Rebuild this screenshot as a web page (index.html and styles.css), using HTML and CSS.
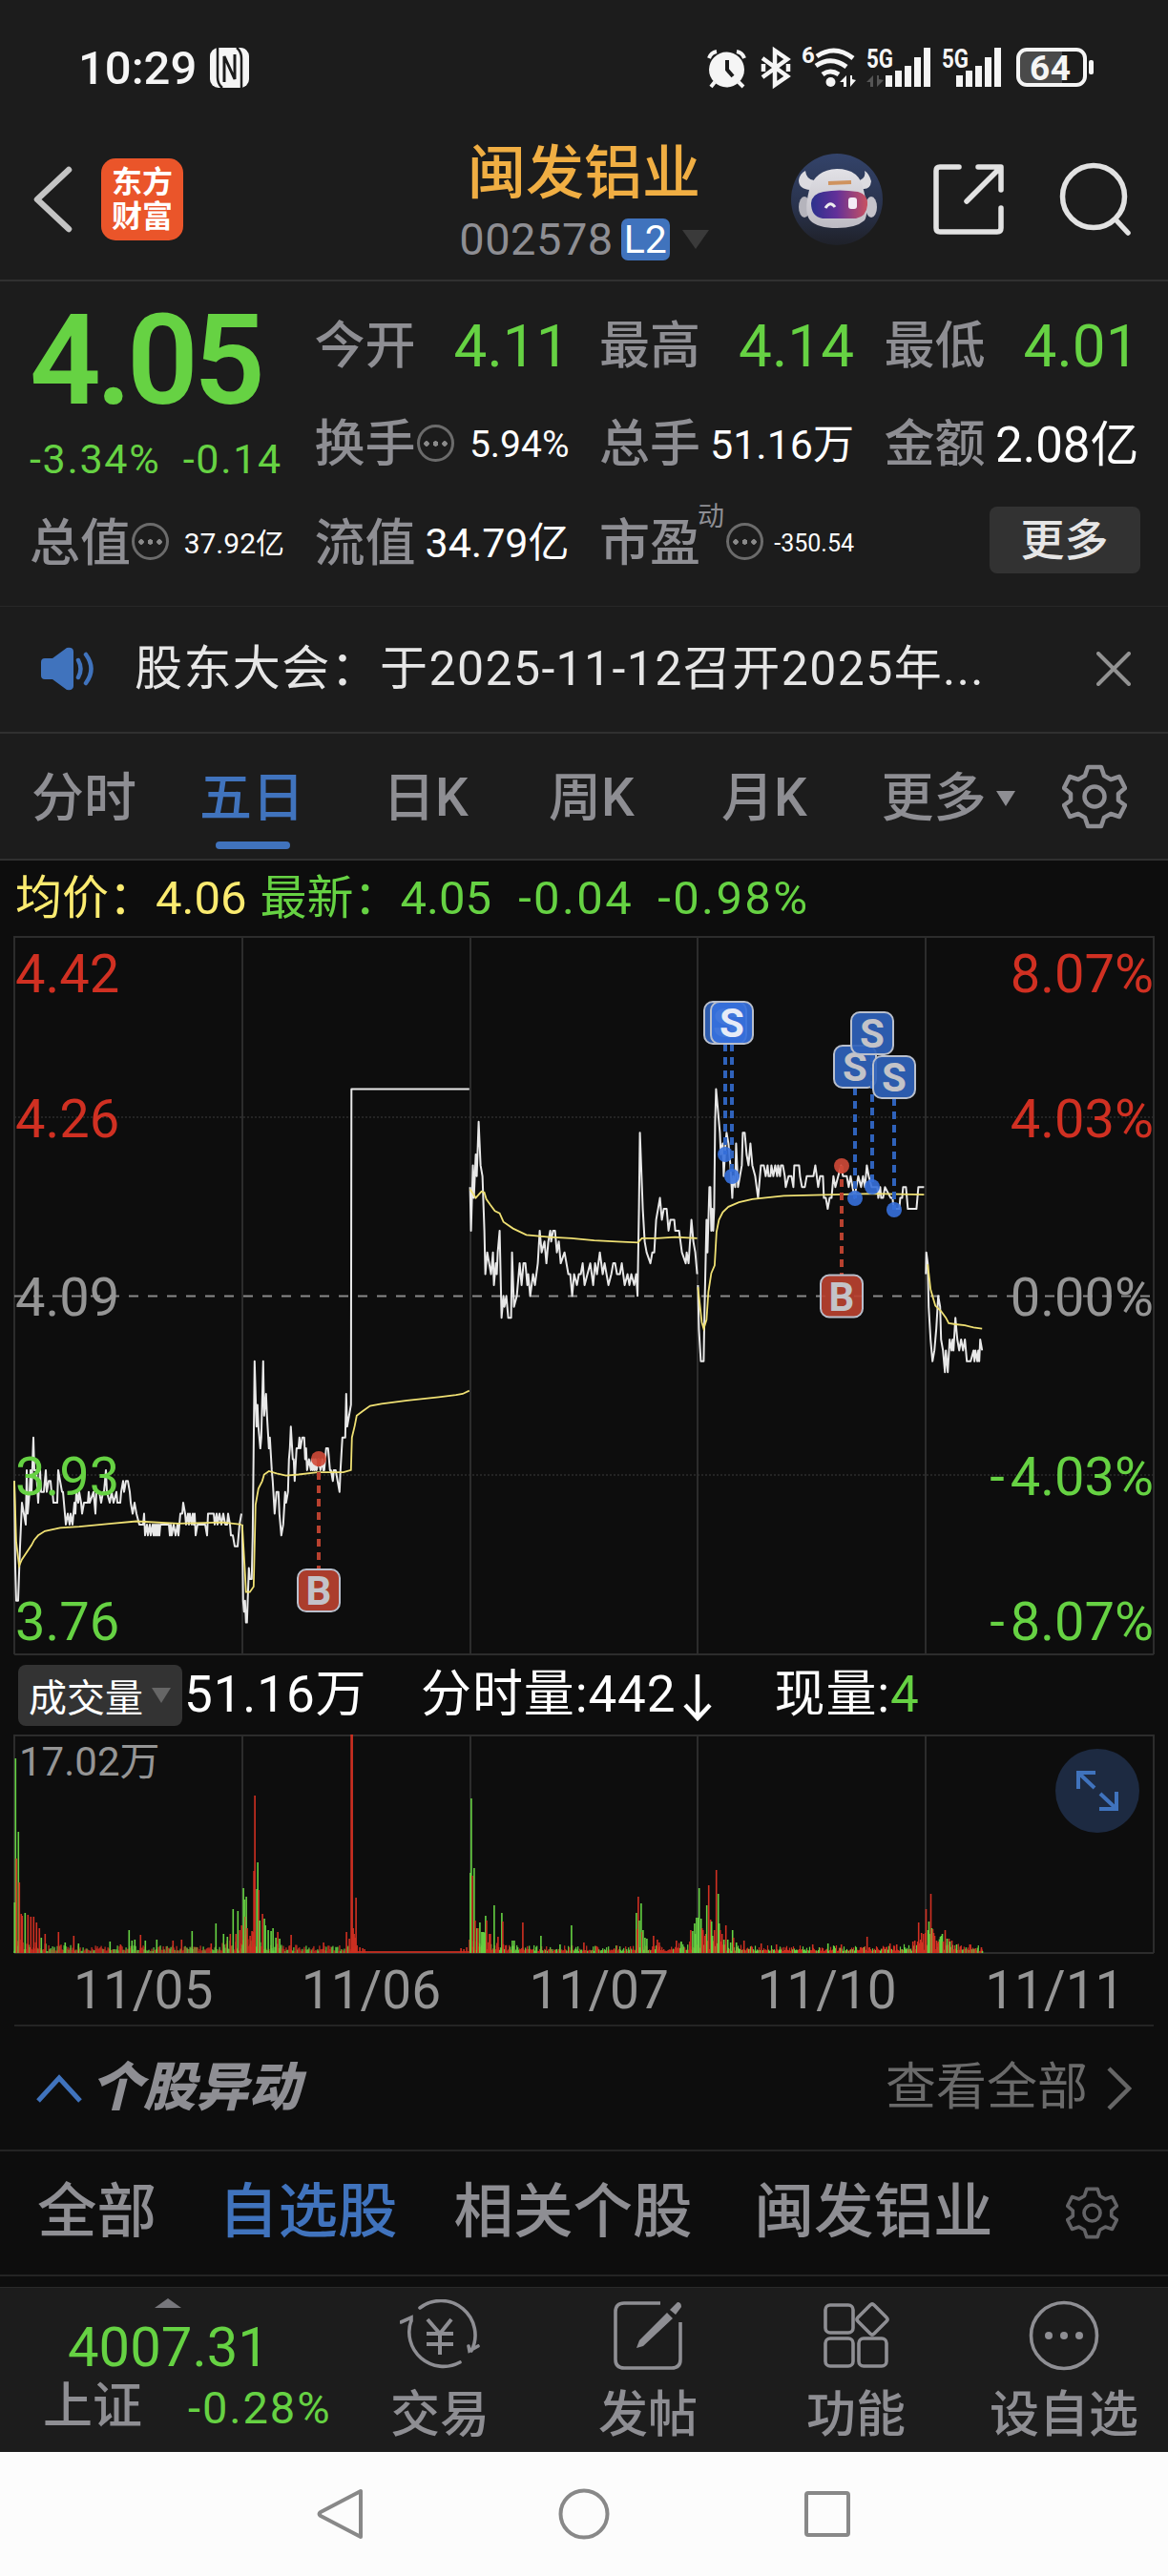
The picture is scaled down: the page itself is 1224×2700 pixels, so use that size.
FILE: index.html
```html
<!DOCTYPE html>
<html lang="zh-CN">
<head>
    <meta charset="UTF-8">
    <meta name="viewport" content="width=device-width, initial-scale=1.0">
    <title>闽发铝业 002578</title>
    <link rel="stylesheet" href="styles.css">
</head>
<body>
    <div class="status-bar">
        <div class="clock">
            <span>10:29</span>
            <svg width="41" height="42" viewBox="0 0 41 42">
                <rect width="41" height="42" rx="9" fill="#f5f5f5"/>
                <path d="M8 0V31Q8 38 13 42M33 42V11Q33 4 28 0" fill="none" stroke="#1c1c1c" stroke-width="2.5"/>
                <path d="M15 36V9L26 33V7" fill="none" stroke="#1c1c1c" stroke-width="3"/>
            </svg>
        </div>
        <svg class="status-icons" width="410" height="60" viewBox="738 41 410 60">
            <!-- alarm -->
            <circle cx="761.5" cy="73" r="18.5"/>
            <path d="M743 61Q745 55 751 54M780 61Q778 55 772 54M749 86L745 91M774 86L779 91" fill="none" stroke="#f5f5f5" stroke-width="4"/>
            <path d="M762 63V73L768 80" fill="none" stroke="#1c1c1c" stroke-width="4"/>
            <!-- bluetooth -->
            <path d="M799 61L825 80L812 89V53L825 62L799 81M800 67V75M826 67V75" fill="none" stroke="#f5f5f5" stroke-width="4.5"/>
            <!-- wifi -->
            <text x="840" y="66" font-size="24">6</text>
            <path d="M856 59Q875 46 894 61M855 69Q871 58 887 70M862 78Q870 72 879 78" fill="none" stroke="#f5f5f5" stroke-width="5"/>
            <circle cx="870.5" cy="86" r="5"/>
            <path d="M887 79V91H884V86H880ZM891 91V79H893V83L897 84Z"/>
            <!-- sim 1 -->
            <text x="908" y="71" font-size="27" textLength="28" lengthAdjust="spacingAndGlyphs">5G</text>
            <path d="M915 79V91H912V86H908ZM919 91V79H921V83L926 84Z" fill="#555"/>
            <path d="M928 79h7v12h-7zM938 74h7v17h-7zM948 69h7v22h-7zM958 60h7v31h-7zM968 50h7v41h-7z"/>
            <!-- sim 2 -->
            <text x="987" y="71" font-size="27" textLength="28" lengthAdjust="spacingAndGlyphs">5G</text>
            <path d="M1002 79h7v12h-7zM1012 74h7v17h-7zM1022 69h7v22h-7zM1032 60h7v31h-7zM1042 50h7v41h-7z"/>
            <!-- battery -->
            <path d="M1069 54h44v33h-44z" fill="#4a4a4a"/>
            <rect x="1067" y="52" width="70" height="37" rx="9" fill="none" stroke="#f5f5f5" stroke-width="4"/>
            <rect x="1141" y="63" width="5" height="15" rx="2"/>
            <text x="1079" y="84" font-size="37" textLength="43">64</text>
        </svg>
    </div>

    <header class="header">
        <div class="header-left">
            <svg width="42" height="70" viewBox="0 0 42 70"><path d="M38 4L5 35L38 66" fill="none" stroke="#c4c4c4" stroke-width="6.5" stroke-linecap="round" stroke-linejoin="round"/></svg>
            <div class="logo">东方<br>财富</div>
        </div>
        <div class="header-title">
            <h1>闽发铝业</h1>
            <div class="code"><span>002578</span><b class="level">L2</b><i class="caret"></i></div>
        </div>
        <div class="header-right">
            <svg width="96" height="96" viewBox="0 0 96 96">
                <defs>
                    <linearGradient id="sky" x1="0" y1="0" x2="0" y2="1"><stop offset="0" stop-color="#33436a"/><stop offset=".6" stop-color="#29324b"/><stop offset="1" stop-color="#1f2129"/></linearGradient>
                    <linearGradient id="visor"><stop offset="0" stop-color="#2b318d"/><stop offset=".45" stop-color="#623099"/><stop offset="1" stop-color="#c95260"/></linearGradient>
                    <linearGradient id="shell" x1="0" y1="0" x2="0" y2="1"><stop offset="0" stop-color="#e2e1e6"/><stop offset="1" stop-color="#bdbbc3"/></linearGradient>
                </defs>
                <circle cx="48" cy="48" r="48" fill="url(#sky)"/>
                <path d="M15 18Q16 27 24 28L20 38Q8 37 8 28Q9 21 15 18ZM77 18Q82 21 84 29Q83 38 75 37L72 28Q79 25 77 18Z" fill="#dcdbe0"/>
                <ellipse cx="14" cy="56" rx="6" ry="11" fill="#b5b4bc"/>
                <ellipse cx="84" cy="56" rx="6" ry="11" fill="#c5c3cb"/>
                <path d="M48 16Q72 16 76 38Q82 62 77 70Q68 78 48 78Q28 78 20 70Q13 62 19 38Q25 17 48 16Z" fill="url(#shell)"/>
                <path d="M39 31L63 30" stroke="#cf935f" stroke-width="4"/>
                <path d="M34 40Q50 37 70 40Q81 43 80 54Q79 66 68 68H33Q21 66 21 52Q22 42 34 40Z" fill="url(#visor)"/>
                <path d="M36 57Q41 49 46 56" fill="none" stroke="#eee" stroke-width="3"/>
                <rect x="60" y="46" width="9" height="12" rx="3" fill="#f3ecf5"/>
            </svg>
            <svg width="74" height="74" viewBox="0 0 74 74"><path d="M27 3H7Q3 3 3 7V67Q3 71 7 71H67Q71 71 71 67V46M47 3H71V27M70 4L35 39" fill="none" stroke="#e2e2e2" stroke-width="5.5" stroke-linecap="round" stroke-linejoin="round"/></svg>
            <svg width="76" height="78" viewBox="0 0 76 78"><circle cx="36" cy="36" r="32.5" fill="none" stroke="#e2e2e2" stroke-width="5.5"/><path d="M59 60L72 74" stroke="#e2e2e2" stroke-width="5.5" stroke-linecap="round"/></svg>
        </div>
    </header>

    <section class="quote">
        <div class="quote-main">
            <div class="price">4.05</div>
            <div class="change"><span>-3.34%</span><span>-0.14</span></div>
        </div>
        <div class="stat"><label>今开</label><b class="v-xl down">4.11</b></div>
        <div class="stat"><label>最高</label><b class="v-xl down">4.14</b></div>
        <div class="stat"><label>最低</label><b class="v-xl down">4.01</b></div>
        <div class="stat"><label>换手</label><i class="tip"></i><b class="v-m">5.94%</b></div>
        <div class="stat"><label>总手</label><b class="v-l">51.16万</b></div>
        <div class="stat"><label>金额</label><b class="v-2xl">2.08亿</b></div>
        <div class="stat"><label>总值</label><i class="tip"></i><b class="v-s">37.92亿</b></div>
        <div class="stat"><label>流值</label><b class="v-l">34.79亿</b></div>
        <div class="stat"><label>市盈<sup>动</sup></label><i class="tip tip-far"></i><b class="v-xs">-350.54</b></div>
        <div class="stat stat-more"><button class="more">更多</button></div>
    </section>

    <section class="notice">
        <svg width="57" height="46" viewBox="0 0 57 46"><path d="M4 12H12L27 1Q34 0 34 5V41Q34 46 27 45L12 34H4Q0 34 0 30V16Q0 12 4 12Z" fill="#4073bd"/><path d="M39 14Q44 23 39 32M47 8Q58 23 47 38" fill="none" stroke="#4073bd" stroke-width="4.5" stroke-linecap="round"/></svg>
        <p>股东大会：于2025-11-12召开2025年...</p>
        <svg width="36" height="36" viewBox="0 0 36 36"><path d="M2 2L34 34M34 2L2 34" stroke="#929292" stroke-width="4" stroke-linecap="round"/></svg>
    </section>

    <nav class="period-tabs">
        <a>分时</a>
        <a class="active">五日</a>
        <a>日K</a>
        <a>周K</a>
        <a>月K</a>
        <a class="drop">更多<i class="caret caret-s"></i></a>
        <svg width="68" height="68" viewBox="0 0 68 68"><use href="#gear"/></svg>
    </nav>

    <section class="chart">
        <div class="legend">
            <span class="avg">均价：<em>4.06</em></span>
            <span class="last">最新：<em>4.05</em></span>
            <span class="last change-value">-0.04</span>
            <span class="last change-value">-0.98%</span>
        </div>
        <svg id="price" class="plot" width="1224" height="754" viewBox="0 0 1224 754"></svg>
        <div class="volume-head">
            <button class="indicator">成交量<i class="caret caret-s"></i></button>
            <span class="vol-total">51.16万</span>
            <span class="vol-minute">分时量:442</span>
            <svg width="30" height="50" viewBox="0 0 30 50"><path d="M15 1V47M2 33L15 47L28 33" fill="none" stroke="#fff" stroke-width="4.5"/></svg>
            <span class="vol-now">现量:<em>4</em></span>
        </div>
        <div class="volume-wrap">
            <svg id="volume" class="plot" width="1224" height="230" viewBox="0 0 1224 230"></svg>
            <button class="expand"><svg width="44" height="42" viewBox="0 0 44 42"><path d="M2 19V2H20M2 2L19 18M24 40H42V22M42 40L25 24" fill="none" stroke="#4073bd" stroke-width="4"/></svg></button>
        </div>
        <div class="dates"><span>11/05</span><span>11/06</span><span>11/07</span><span>11/10</span><span>11/11</span></div>
    </section>

    <section class="moves">
        <svg width="48" height="30" viewBox="0 0 48 30"><path d="M2 28L24 4L46 28" fill="none" stroke="#4073bd" stroke-width="5"/></svg>
        <h2>个股异动</h2>
        <a>查看全部</a>
        <svg width="26" height="46" viewBox="0 0 26 46"><path d="M2 2L23 23L2 44" fill="none" stroke="#666" stroke-width="4.5"/></svg>
    </section>
    <nav class="move-tabs">
        <a>全部</a>
        <a class="active">自选股</a>
        <a>相关个股</a>
        <a>闽发铝业</a>
        <svg width="55" height="55" viewBox="0 0 68 68"><use href="#gear"/></svg>
    </nav>

    <footer class="toolbar">
        <div class="index">
            <i class="caret-up"></i>
            <strong>4007.31</strong>
            <div><span>上证</span><b>-0.28%</b></div>
        </div>
        <a>
            <svg width="84" height="76" viewBox="0 0 84 76"><path d="M21 9A36 36 0 0 1 75 54M63 66A36 36 0 0 1 12 22M1 24L12 19L12 23M82 49L73 54L72 49" fill="none" stroke="#8e8e93" stroke-width="3.6" stroke-linecap="round"/><path d="M29 21L42 36L54 21M28 36H56M28 47H56M42 36V58" fill="none" stroke="#8e8e93" stroke-width="4"/></svg>
            <span>交易</span>
        </a>
        <a>
            <svg width="72" height="76" viewBox="0 0 72 76"><path d="M49 4H11Q2 4 2 13V63Q2 72 11 72H61Q70 72 70 63V24" fill="none" stroke="#8e8e93" stroke-width="3.6"/><path d="M56 14L62 20L31 49L24 51L27 43ZM59 11L67 3Q71 3 71 8L65 16Z" fill="#8e8e93"/></svg>
            <span>发帖</span>
        </a>
        <a>
            <svg width="70" height="76" viewBox="0 0 70 76"><g fill="none" stroke="#8e8e93" stroke-width="3.6"><rect x="3" y="6" width="29" height="29" rx="5"/><rect x="3" y="41" width="29" height="29" rx="5"/><rect x="38" y="41" width="29" height="29" rx="5"/><path d="M50 6Q52 4 54 6L67 19Q69 21 67 23L54 36Q52 38 50 36L37 23Q35 21 37 19Z"/></g></svg>
            <span>功能</span>
        </a>
        <a>
            <svg width="74" height="76" viewBox="0 0 74 76"><circle cx="37" cy="38" r="34.5" fill="none" stroke="#8e8e93" stroke-width="3.6"/><g fill="#8e8e93"><circle cx="21" cy="38" r="4"/><circle cx="37" cy="38" r="4"/><circle cx="53" cy="38" r="4"/></g></svg>
            <span>设自选</span>
        </a>
    </footer>
    <div class="system-nav">
        <svg width="54" height="54" viewBox="0 0 54 54"><path d="M48 3V51L6 29Q3 27 6 25Z" fill="none" stroke="#888" stroke-width="4" stroke-linejoin="round"/></svg>
        <svg width="54" height="54" viewBox="0 0 54 54"><circle cx="27" cy="27" r="24.5" fill="none" stroke="#888" stroke-width="4"/></svg>
        <svg width="54" height="54" viewBox="0 0 54 54"><rect x="5" y="5" width="44" height="44" rx="2" fill="none" stroke="#888" stroke-width="4"/></svg>
    </div>

    <svg class="defs" width="0" height="0">
        <symbol id="gear" viewBox="0 0 68 68">
            <path d="M27 3H41L44 12L51 16L60 13L66 25L59 31V38L66 43L60 55L51 52L44 56L41 65H27L24 56L17 52L8 55L2 43L9 38V31L2 25L8 13L17 16L24 12Z" fill="none" stroke="currentColor" stroke-width="4.5" stroke-linejoin="round"/>
            <circle cx="34" cy="34" r="10.5" fill="none" stroke="currentColor" stroke-width="4.5"/>
        </symbol>
    </svg>
    <script src="app.js"></script>
</body>
</html>
```
FILE: styles.css
```css
* {
    margin: 0;
    padding: 0;
    box-sizing: border-box;
}

:root {
    --panel: #1c1c1c;
    --dark: #0d0d0d;
    --line: #303030;
    --gray: #8e8e93;
    --blue: #4073bd;
    --green: #66d243;
    --red: #d03022;
}

body {
    width: 1224px;
    background: var(--dark);
    color: #fff;
    font-family: Roboto, 'Noto Sans CJK SC', sans-serif;
    line-height: 1;
}

svg {
    display: block;
    flex: none;
}

i, em {
    font-style: normal;
}

b {
    font-weight: 400;
}

button {
    border: none;
    font-family: inherit;
}

.defs {
    position: absolute;
}

.caret {
    border: 14px solid transparent;
    border-top: 20px solid #3a3a3a;
    border-bottom: none;
}

.caret-s {
    border-width: 16px 10px 0;
    border-top-color: var(--gray);
}

/* status bar */
.status-bar {
    display: flex;
    justify-content: space-between;
    align-items: center;
    height: 142px;
    padding: 0 76px 0 82px;
    background: var(--panel);
}

.clock {
    display: flex;
    align-items: center;
    gap: 15px;
    font-size: 49px;
    font-weight: 500;
    color: #f5f5f5;
}

.clock span {
    width: 123px;
}

.status-icons {
    fill: #f5f5f5;
    font-weight: 700;
}

/* header */
.header {
    display: grid;
    grid-template-columns: 412px 400px 1fr;
    height: 153px;
    background: var(--panel);
    border-bottom: 2px solid var(--line);
}

.header-left {
    display: flex;
    align-items: center;
    gap: 30px;
    padding: 0 0 18px 34px;
}

.logo {
    width: 86px;
    height: 86px;
    padding-top: 7px;
    border-radius: 15px;
    background: #ea552a;
    font-size: 32px;
    font-weight: 700;
    line-height: 36px;
    text-align: center;
}

.header-title {
    display: flex;
    flex-direction: column;
    align-items: center;
}

.header-title h1 {
    margin-top: 8px;
    font-size: 61px;
    font-weight: 500;
    line-height: 64px;
    color: #f0ae43;
}

.code {
    display: flex;
    align-items: center;
    margin-top: 15px;
    font-size: 47px;
    line-height: 44px;
    letter-spacing: 0.5px;
    color: var(--gray);
}

.level {
    width: 51px;
    margin: 0 13px 0 8px;
    border-radius: 7px;
    background: var(--blue);
    color: #fff;
    font-size: 41px;
    letter-spacing: 0;
    text-align: center;
}

.header-right {
    display: flex;
    align-items: center;
    padding: 0 0 18px 17px;
}

.header-right svg + svg {
    margin-left: 53px;
}

.header-right svg:last-child {
    margin-left: 58px;
}

/* quote */
.quote {
    display: grid;
    grid-template-columns: repeat(4, 265px);
    grid-template-rows: repeat(3, 103.5px);
    column-gap: 33.5px;
    height: 340px;
    padding: 16px 32px 0 31px;
    background: var(--panel);
}

.quote-main {
    grid-row: span 2;
    color: var(--green);
}

.price {
    font-size: 131px;
    font-weight: 600;
    line-height: 134px;
    letter-spacing: -5px;
}

.change {
    display: flex;
    justify-content: space-between;
    margin-top: 14px;
    font-size: 43px;
    line-height: 44px;
    letter-spacing: 1.7px;
    white-space: nowrap;
}

.stat {
    display: flex;
    align-items: center;
    white-space: nowrap;
}

.stat label {
    position: relative;
    font-size: 53px;
    font-weight: 500;
    line-height: 60px;
    color: var(--gray);
}

.stat sup {
    position: absolute;
    left: 103px;
    top: -28px;
    font-size: 28px;
    font-weight: 400;
}

.stat b {
    margin-left: auto;
    margin-right: -2px;
}

.tip {
    width: 39px;
    height: 39px;
    margin: -4px 0 0 1px;
    border: 3px solid #6b6b6b;
    border-radius: 50%;
    background: radial-gradient(circle at 7px 17px, #8a8a8a 2.5px, transparent 3px), radial-gradient(circle at 16.5px 17px, #8a8a8a 2.5px, transparent 3px), radial-gradient(circle at 26px 17px, #8a8a8a 2.5px, transparent 3px);
}

.tip-far {
    margin-left: 27px;
}

.down {
    color: var(--green);
}

.v-2xl { font-size: 51px; }
.v-xl { font-size: 62px; }
.v-l { font-size: 43px; }
.v-m { font-size: 39px; }
.v-s { font-size: 30px; }
.v-xs { font-size: 25px; }

.stat-more {
    justify-content: flex-end;
}

.more {
    width: 158px;
    height: 70px;
    margin: -7px -3px 0 0;
    border-radius: 8px;
    background: #323232;
    color: #e6e6e6;
    font-size: 46px;
    font-weight: 500;
    line-height: 66px;
}

/* notice */
.notice {
    display: flex;
    align-items: center;
    height: 134px;
    padding: 0 39px 2px 43px;
    background: var(--panel);
    border-top: 1px solid #272727;
    border-bottom: 2px solid var(--line);
}

.notice p {
    flex: 1;
    margin-left: 41px;
    font-size: 50px;
    letter-spacing: 1.4px;
    white-space: nowrap;
    color: #e6e6e6;
}

/* period tabs */
.period-tabs {
    display: grid;
    grid-template-columns: 176px 176px 188px 160px 202px 183px 123px;
    align-items: center;
    justify-items: center;
    height: 133px;
    background: var(--panel);
    border-bottom: 2px solid var(--line);
    color: var(--gray);
    font-size: 55px;
    font-weight: 500;
}

.period-tabs a {
    position: relative;
    padding-top: 4px;
}

.active {
    color: var(--blue);
}

.period-tabs .active::after {
    content: '';
    position: absolute;
    left: 50%;
    bottom: -26px;
    width: 78px;
    height: 8px;
    margin-left: -38px;
    border-radius: 4px;
    background: var(--blue);
}

.drop {
    display: flex;
    align-items: center;
    gap: 10px;
}

/* chart */
.legend {
    display: flex;
    align-items: center;
    height: 79px;
    padding-left: 16px;
    font-size: 49px;
    white-space: nowrap;
}

.legend .avg {
    margin-right: 14px;
    color: #fbeb70;
}

.legend .last {
    margin-right: 28px;
    color: var(--green);
}

.legend .change-value {
    margin-right: 25px;
    letter-spacing: 2.4px;
}

.plot text {
    font-size: 56px;
}

.volume-head {
    display: flex;
    align-items: center;
    height: 83px;
    padding-left: 19px;
    font-size: 53px;
    letter-spacing: 0.9px;
    white-space: nowrap;
}

.indicator {
    display: flex;
    align-items: center;
    gap: 9px;
    width: 172px;
    height: 64px;
    padding-left: 11px;
    border-radius: 8px;
    background: #333;
    color: #fff;
    font-size: 40px;
}

.indicator .caret {
    border-top-color: #666;
}

.vol-total {
    width: 248px;
    margin-left: 2px;
}

.volume-head svg {
    margin: 4px 66px 0 7px;
}

.vol-now em {
    color: var(--green);
}

.volume-wrap {
    position: relative;
}

.expand {
    position: absolute;
    top: 15px;
    right: 30px;
    display: flex;
    align-items: center;
    justify-content: center;
    width: 88px;
    height: 88px;
    border-radius: 50%;
    background: #1d2a41;
}

.dates {
    display: grid;
    grid-template-columns: repeat(5, 1fr);
    height: 76px;
    margin: 0 15px;
    border-bottom: 2px solid #242424;
    color: #959595;
    font-size: 55px;
    line-height: 77px;
}

.dates span {
    padding-left: 62px;
}

/* stock moves */
.moves {
    display: flex;
    align-items: center;
    height: 131px;
    padding: 0 38px;
    border-bottom: 2px solid #242424;
}

.moves h2 {
    flex: 1;
    margin-left: 9px;
    font-size: 55px;
    font-weight: 900;
    font-style: italic;
    color: var(--gray);
}

.moves a {
    margin-right: 20px;
    font-size: 53px;
    color: #6a6a6a;
}

.move-tabs {
    display: flex;
    align-items: center;
    height: 131px;
    padding: 0 52px 0 39px;
    border-bottom: 2px solid #242424;
    color: var(--gray);
    font-size: 62.5px;
    font-weight: 500;
}

.move-tabs a {
    margin-right: 65px;
}

.move-tabs a.active {
    margin-right: 59px;
}

.move-tabs svg {
    margin-left: auto;
    color: #636366;
}

/* toolbar */
.toolbar {
    display: grid;
    grid-template-columns: 352px repeat(4, 218px);
    height: 173px;
    margin-top: 11px;
    background: var(--panel);
    border-top: 1px solid #2a2a2a;
    color: var(--gray);
    font-size: 52px;
    font-weight: 500;
}

.toolbar a {
    display: flex;
    flex-direction: column;
    align-items: center;
    padding-top: 12px;
}

.toolbar a span {
    margin-top: 20px;
}

.index {
    position: relative;
    padding-left: 71px;
}

.caret-up {
    position: absolute;
    top: 11px;
    left: 162px;
    border: 14px solid transparent;
    border-top: none;
    border-bottom: 10px solid #77777c;
}

.index strong {
    display: block;
    margin-top: 33px;
    color: var(--green);
    font-size: 58px;
    font-weight: 400;
}

.index div {
    display: flex;
    align-items: center;
    gap: 48px;
    margin: 8px 0 0 -26px;
    white-space: nowrap;
}

.index b {
    color: var(--green);
    font-size: 47px;
    letter-spacing: 1.9px;
}

/* android keys */
.system-nav {
    display: flex;
    justify-content: center;
    align-items: center;
    gap: 201px;
    height: 130px;
    background: #fcfcfc;
}
```
FILE: app.js
```javascript
const NS = 'http://www.w3.org/2000/svg';
const LEFT = 15;
const DAY = 238.8;
const GREEN = '#66d243', RED = '#d03022', GRAY = '#959595';

// price ticks, "minute:cents" for every trading day
const prices = [
  '0:392 1:384 2:381 4:381 6:386 7:388 8:390 10:389 12:388 13:393 14:389 16:391 17:393 18:391 20:396 21:393 23:393 25:390 27:393 28:391 31:391 33:393 34:391 36:392 38:392 39:391 40:391 41:390 45:390 46:393 48:392 50:391 51:391 53:389 54:388 56:389 58:388 59:389 61:388 62:389 63:390 64:389 65:391 67:390 68:391 70:390 71:389 73:390 77:390 78:391 79:390 83:391 85:389 86:391 89:391 91:390 93:391 94:391 96:393 97:391 100:390 102:391 104:390 107:391 108:390 111:390 112:391 114:392 115:391 117:392 119:392 121:391 122:390 124:389 126:390 128:389 131:388 135:388 136:389 137:387 139:388 140:387 142:388 143:387 145:388 146:387 147:388 148:387 149:388 150:387 151:388 152:387 153:388 154:388 162:388 163:387 164:388 165:387 167:388 169:387 171:388 172:387 173:388 174:389 176:389 177:390 179:389 180:388 182:389 183:388 184:389 186:388 187:389 188:388 189:389 190:387 192:388 200:388 202:387 203:389 209:389 210:388 212:389 213:388 215:389 217:388 219:389 221:388 223:388 224:389 226:388 227:387 229:387 231:386 234:386 235:387 236:388 238:389',
  '0:388 1:381 2:380 3:381 4:379 5:379 7:384 8:383 10:383 11:387 13:403 15:397 16:399 17:397 19:395 20:396 22:403 23:398 25:400 26:398 28:395 29:396 31:393 32:392 34:389 36:391 38:391 39:389 41:387 43:388 45:391 46:390 48:391 49:394 50:395 51:397 53:394 54:394 55:392 57:395 59:395 60:396 61:395 63:396 65:396 66:394 67:395 68:393 70:394 72:393 73:394 74:393 75:394 76:393 77:394 78:393 80:394 82:393 84:394 85:393 86:393 88:395 90:395 92:393 93:393 95:392 96:393 98:393 100:392 102:391 103:393 105:396 108:396 109:400 110:397 112:398 114:399 114.5:428 238:428',
  '0:419 1:415 3:421 4:418 6:422 7:420 9:425 11:421 13:420 15:415 16:411 18:413 20:412 22:411 24:413 25:410 27:412 28:411 29:413 31:415 33:407 35:409 36:408 38:409 40:407 43:407 44:413 46:408 49:409 50:410 52:412 54:410 56:412 58:412 60:410 61:411 63:409 66:411 68:410 71:412 73:415 75:413 78:414 80:412 82:414 84:415 85:414 87:415 89:415 91:413 93:414 95:412 99:413 103:411 105:411 107:409 109:411 112:410 114:411 116:411 118:412 120:410 123:411 126:412 129:410 131:412 133:411 136:413 139:411 141:412 145:410 148:411 150:412 152:412 154:411 157:411 159:412 162:410 165:411 167:410 169:411 172:410 174:411 175.5:409 177:417 178:424 181:417 183:414 185:413 189:412 191:413 193:413 195:416 197:417 199:418 201:416 203:417 206:417 208:415 210:416 214:416 215:415 219:415 222:413 226:412 227:413 229:412 232:416 234:414 236:413 238:411',
  '0:410 1:406 3:403 6:403 7:408 9:416 10:413 12:419 13:419 14:415 15:417 16:415 17:417 18:425 19:428 21:426 23:424 24:422 26:423 27:420 29:423 30:424 32:423 34:421 36:418 37:420 39:419 40:423 42:419 44:420 46:421 47:424 49:424 51:422 53:421 55:423 57:421 60:420 63:418 66:421 69:421 71:420 73:421 74:420 76:420 77:421 79:420 81:421 83:420 84:421 86:420 87:421 89:421 91:420 92:419 95:420 98:420 100:419 101:421 106:421 107:420 109:419 112:419 114:420 121:420 123:421 126:419 128:420 131:420 132:418 134:418 136:417 138:418 140:418 142:420 144:419 147:420 150:421 152:420 156:420 158:419 160:420 162:419 164:418 166:419 168:420 171:419 173:420 175:419 177:421 179:420 182:419 188:419 189:418 191:419 192:418 194:418 196:419 202:418 204:418 205:417 211:417 212:418 214:418 215:419 218:419 220:417 229:417 231:419 237:419',
  '0:411 .5:413 2:412 3:408 5:405 7:403 9:404 11:406 13:409 15:408 16:405 18:404 20:402 21:404 23:402 25:405 27:404 28:405 29:404 31:407 33:405 35:404 37:405 39:404 41:405 43:403 47:403 50:404 51:403 52:404 54:403 55:404 56:403 57:405 59:404'
];

const averages = [
  '0:392 2:386.4 5:384.2 8:384.8 18:386.1 21:386.6 25:387 32:387.4 48:387.7 68:387.8 102:388.1 128:388.3 172:388.1 218:388.2 238:388',
  '0:388 3:383.5 4:381.8 8:381.8 12:382.3 13:386 14:389.8 17:391.3 21:392 23:392.6 28:392.9 36:392.7 46:392.5 59:392.6 79:392.8 106:392.8 114:393 115:396 118:397.1 120:398 126:398.4 134:398.9 146:399.1 173:399.4 206:399.7 224:399.9 231:400 238:400.3',
  '0:418.8 6:418 9:418.3 12:418.6 15:418.5 17:417.9 21:417.4 26:416.8 31:416.6 35:415.8 45:415.2 59:414.6 83:414.4 106:414.3 130:414.1 154:414 176:413.9 180:414.3 196:414.3 215:414.4 238:414.3',
  '0:409.8 4:406.6 6:406 9:406.8 11:409.4 14:411.1 17.5:411.8 19.5:414.9 22:416 26:416.7 32:417.2 43:417.6 57:417.9 90:418.2 142:418.3 182:418.4 237:418.3',
  '2:411.9 5:409.6 10:408.1 16:407.6 21:407 24:406.5 31:406.4 41:406.3 50:406.1 59:406'
];

// notable volume bars, "minute:height" + g/r
const volumes = [
  '0:53g 1:204g 2:99r 4:127g 5:74r 7:41r 8:39r 11:42g 14:40r 17:38r 20:38r 23:32r 26:26r 28:16g 32:20r 46:22r 53:11g 62:18r 67:10g 100:12g 111:9r 120:24g 123:13g 126:14g 132:19r 137:13g 149:14g 166:13r 175:14r 186:23g 206:10r 211:31g 219:20g 223:17g 226:20r 229:46g 232:20r 234:44g 236:24r 238:29r',
  '1:68g 2:56g 3:38r 4:59g 5:26r 8:18r 10:23r 11:22r 12:86r 13:165r 15:67g 16:95g 17:66r 18:34g 21:41r 23:36g 24:29g 27:24g 30:23g 32:26g 35:16g 37:22r 39:15g 51:19r 85:11r 109:22r 112:15r 114:229r 115:229r 116:26r 117:20r 118:16r 119:58r 120:8r 123:6r 126:5r 128:4r 229:5r 232:4r 235:6r 238:14r',
  '0:84g 1:162g 2:81r 4:89g 5:34r 7:26g 8:26r 10:32g 12:22g 13:22g 14:22g 15:21g 16:39g 17:34r 20:20r 21:20r 25:50g 29:17r 33:42g 34:33r 44:13g 46:13g 55:32r 74:18g 94:9g 106:29g 119:11r 174:42g 175:25r 176:59r 177:34g 179:52g 180:22r 181:24g 183:16g 185:15g 192:18r 196:14r 198:11r 216:13r 221:12g 231:24r 233:23g 235:31g 236:20g 237:37g',
  '0:37g 1:68g 3:36g 4:26r 5:24r 7:18r 8:20r 9:50g 11:71r 13:35r 14:33g 15:18g 17:24r 19:87r 21:62g 22:31g 23:24r 25:20r 27:14g 29:29r 31:14g 34:11g 36:24g 37:16r 40:11g 48:13r 66:10r 82:9r 120:9r 136:10g 150:9r 177:17r 201:10r 208:9r 225:12r 227:13r 230:12r 231:32r 233:14r 234:21r 236:20r 238:21r',
  '0:46r 2:24g 3:33g 4:20g 5:62r 6:26g 7:25r 8:21r 9:18r 11:13r 13:12r 15:17g 16:18g 17:20g 18:12r 20:24r 22:15g 24:15r 25:12g 27:13r 30:8r 32:9g 36:7r 46:9r 52:5r 58:6r 59:2g'
];

function add(parent, tag, attrs, text) {
  const el = document.createElementNS(NS, tag);
  for (const k in attrs) el.setAttribute(k, attrs[k]);
  if (text) el.textContent = text;
  parent.appendChild(el);
  return el;
}

function frame(svg, bottom) {
  for (let i = 0; i <= 5; i++) {
    const x = Math.round(LEFT + i * DAY);
    add(svg, 'path', { d: `M${x} 0V${bottom}`, stroke: '#2c2c2c', 'stroke-width': 2 });
  }
  add(svg, 'path', { d: `M${LEFT} 1H1209M${LEFT} ${bottom}H1209`, stroke: '#2c2c2c', 'stroke-width': 2 });
}

function toPoints(str, day) {
  return str.split(' ').map(p => {
    const [m, c] = p.split(':').map(Number);
    return (LEFT + day * DAY + m).toFixed(1) + ',' + ((442 - c) * 11.41 + 0.8).toFixed(1);
  }).join(' ');
}

// ---- price chart ----
const price = document.getElementById('price');
frame(price, 753);
add(price, 'path', { d: 'M15 190H1209M15 565H1209', stroke: '#2c2c2c', 'stroke-width': 1.5, 'stroke-dasharray': '2 2' });
add(price, 'path', { d: 'M15 377.5H1209', stroke: '#8a8a8a', 'stroke-width': 2, 'stroke-dasharray': '10 10' });
for (let d = 0; d < 5; d++) {
  add(price, 'polyline', { points: toPoints(prices[d], d), fill: 'none', stroke: '#e8e8e8', 'stroke-width': 2, 'stroke-linejoin': 'round' });
  add(price, 'polyline', { points: toPoints(averages[d], d), fill: 'none', stroke: '#efe073', 'stroke-width': 1.8 });
}

const axis = [
  [58.5, '4.42', '8.07%', RED],
  [210.5, '4.26', '4.03%', RED],
  [398, '4.09', '0.00%', GRAY],
  [585.5, '3.93', '-4.03%', GREEN],
  [737.5, '3.76', '-8.07%', GREEN]
];
axis.forEach(([y, left, right, color]) => {
  add(price, 'text', { x: 16, y, fill: color }, left);
  const label = add(price, 'text', { x: 1209, y, fill: color, 'text-anchor': 'end' }, right);
  if (right[0] === '-') label.setAttribute('dx', '0 6');
});

// buy and sell marks: type, x, dot y, badge center y
const marks = [
  ['B', 334, 548, 686], ['B', 882, 241, 377.5],
  ['S', 760, 229, 91], ['S', 767, 252, 91],
  ['S', 896, 275, 137], ['S', 914, 263, 102], ['S', 937, 287, 148]
];
marks.forEach(([type, x, dot, cy]) => {
  const buy = type === 'B';
  const color = buy ? '#b8412f' : '#2f62bb';
  const from = buy ? dot : cy + 22;
  const to = buy ? cy - 22 : dot;
  const top = x === 767;
  add(price, 'path', { d: `M${x} ${from}V${to}`, stroke: color, 'stroke-width': 4, 'stroke-dasharray': '8 6' });
  add(price, 'circle', { cx: x, cy: dot, r: 8, fill: buy ? '#d04a38' : '#3670dc', 'fill-opacity': .9 });
  add(price, 'rect', { x: x - 22, y: cy - 22, width: 44, height: 44, rx: 9, fill: top ? '#3670dc' : color, 'fill-opacity': .92, stroke: '#b9bfcc', 'stroke-width': 2 });
  const t = add(price, 'text', { x, y: cy + 15, fill: top ? '#e6ebf7' : '#c3c3c8', 'text-anchor': 'middle', 'font-weight': 700 }, type);
  t.style.fontSize = '42px';
});

// ---- volume chart ----
const volume = document.getElementById('volume');
frame(volume, 229);
let seed = 7;
const rand = () => (seed = (seed * 16807) % 2147483647) / 2147483647;
volumes.forEach((str, day) => {
  const minutes = day === 4 ? 60 : 239;
  for (let m = 0; m < minutes; m++) {
    // trading is locked at the limit price on the second afternoon
    const locked = day === 1 && m > 119;
    const h = locked ? 2 : 2 + rand() * (6 + 16 * Math.exp(-m / 18) + (m > 215 ? 5 : 0)) * (rand() > .4 ? 1 : .35);
    const up = locked || rand() > .38;
    add(volume, 'rect', { x: (LEFT + day * DAY + m - .5).toFixed(1), y: 229 - h, width: 1.2, height: h, fill: up ? RED : GREEN });
  }
  str.split(' ').forEach(p => {
    const [m, v] = p.split(':');
    const h = parseInt(v);
    add(volume, 'rect', { x: (LEFT + day * DAY + Number(m) - .5).toFixed(1), y: 229 - h, width: 1.6, height: h, fill: v.endsWith('g') ? GREEN : RED });
  });
});
const peak = add(volume, 'text', { x: 20, y: 43, fill: GRAY }, '17.02万');
peak.style.fontSize = '42px';
```
